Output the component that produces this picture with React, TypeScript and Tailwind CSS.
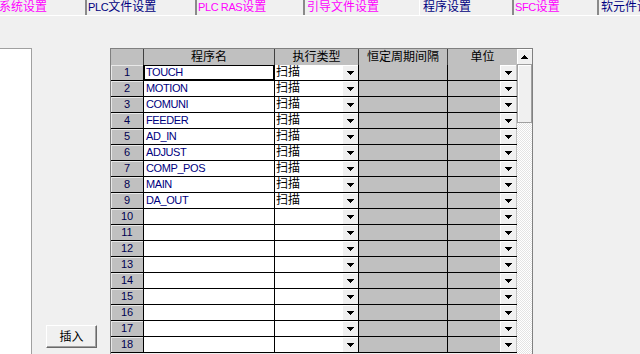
const tabs = [
  { latin: "", cjk: "系统设置", color: "text-[#ff00ff]", cls: "w-[88px] -ml-[1px] border-r-2" },
  { latin: "PLC", cjk: "文件设置", color: "text-[#000080]", cls: "w-[110px] pl-[1px] border-r-2" },
  { latin: "PLC RAS", cjk: "设置", color: "text-[#ff00ff]", cls: "w-[108px] pl-[1px] border-r-2" },
  { latin: "", cjk: "引导文件设置", color: "text-[#ff00ff]", cls: "w-[114px] pl-[2px]" },
  { latin: "", cjk: "程序设置", color: "text-[#000080]", cls: "w-[95px] pl-[3px] border-l border-l-white border-r-2" },
  { latin: "SFC", cjk: "设置", color: "text-[#ff00ff]", cls: "w-[85px] pl-[1px] border-r-2" },
  { latin: "", cjk: "软元件设置", color: "text-[#000080]", cls: "flex-1 pl-[2px]" },
];

const programs = [
  "TOUCH",
  "MOTION",
  "COMUNI",
  "FEEDER",
  "AD_IN",
  "ADJUST",
  "COMP_POS",
  "MAIN",
  "DA_OUT",
  "",
  "",
  "",
  "",
  "",
  "",
  "",
  "",
  "",
];

const Arrow = ({ up }: { up?: boolean }) => (
  <svg width="7" height="4" viewBox="0 0 7 4" shapeRendering="crispEdges">
    <path
      d={
        up
          ? "M3 0h1v1h1v1h1v1h1v1h-7v-1h1v-1h1v-1h1z"
          : "M0 0h7v1h-1v1h-1v1h-1v1h-1v-1h-1v-1h-1v-1h-1z"
      }
      fill="#000"
    />
  </svg>
);

const DropButton = () => (
  <div className="w-[16px] h-full bg-[#f0f0f0] shadow-[inset_1px_1px_0_#ffffff] flex items-center justify-center shrink-0">
    <Arrow />
  </div>
);

export default function App() {
  return (
    <div className="w-[640px] h-[354px] bg-[#f0f0f0] overflow-hidden flex flex-col font-['Liberation_Sans','Noto_Sans_CJK_SC',sans-serif] text-black">
      {/* tab strip */}
      <div className="h-[16px] flex border-b border-white shrink-0 whitespace-nowrap overflow-hidden">
        {tabs.map((t, i) => (
          <div
            key={i}
            className={`h-[15px] shrink-0 border-r-[#8a8a8a] text-[12px] leading-[14px] ${t.color} ${t.cls}`}
          >
            {t.latin && <span className="text-[11px] tracking-[-0.4px]">{t.latin}</span>}
            {t.cjk}
          </div>
        ))}
      </div>

      <div className="flex flex-1 mt-[32px] min-h-0">
        {/* left list */}
        <div className="w-[32px] bg-white border-t border-r border-[#a0a0a0] shrink-0" />

        {/* insert button */}
        <div className="w-[78px] shrink-0 flex flex-col justify-end pb-[6px] pl-[14px]">
          <button className="w-[51px] h-[23px] bg-[#f0f0f0] border border-t-white border-l-white border-r-[#696969] border-b-[#696969] shadow-[inset_-1px_-1px_0_#a0a0a0] text-[12px] leading-[20px] text-black">
            插入
          </button>
        </div>

        {/* grid frame */}
        <div className="flex border-t border-l border-r border-[#808080] shrink-0">
          <div className="w-[406px] flex flex-col">
            {/* header */}
            <div className="grid grid-cols-[33px_131px_84px_89px_69px] h-[16px] shrink-0 bg-[#c0c0c0] text-[12px] leading-[16px]">
              <div className="border-r border-b border-[#404040]" />
              <div className="border-r border-b border-[#404040] text-center">程序名</div>
              <div className="border-r border-b border-[#404040] text-center">执行类型</div>
              <div className="border-r border-b border-[#404040] text-center">恒定周期间隔</div>
              <div className="border-b border-[#404040] text-center">单位</div>
            </div>

            {/* body */}
            {programs.map((name, i) => (
              <div
                key={i}
                className="grid grid-cols-[33px_131px_84px_89px_69px] h-[16px] shrink-0"
              >
                <div className="bg-[#c0c0c0] border-r border-b border-black shadow-[inset_1px_1px_0_#e8e8e8] text-center text-[11px] leading-[15px] text-[#000050]">
                  {i + 1}
                </div>
                <div className="bg-white border-r border-b border-black">
                  {i === 0 ? (
                    <div className="h-full border border-black pl-[1px] text-[11px] leading-[13px] tracking-[-0.4px] text-[#000080]">
                      {name}
                    </div>
                  ) : (
                    <div className="h-full pl-[2px] text-[11px] leading-[15px] tracking-[-0.4px] text-[#000080]">
                      {name}
                    </div>
                  )}
                </div>
                <div className="bg-white border-r border-b border-black flex">
                  <div className="flex-1 pl-[1px] text-[12px] leading-[15px]">
                    {name ? "扫描" : ""}
                  </div>
                  <DropButton />
                </div>
                <div className="bg-[#c0c0c0] border-r border-b border-black" />
                <div className="bg-[#c0c0c0] border-b border-black flex justify-end">
                  <div className="pr-[1px] h-full flex">
                    <DropButton />
                  </div>
                </div>
              </div>
            ))}
          </div>

          {/* vertical scrollbar */}
          <div className="w-[15px] flex flex-col">
            <div className="h-[16px] shrink-0 bg-[#f0f0f0] border-b border-[#a0a0a0] shadow-[inset_1px_1px_0_#ffffff] flex items-center justify-center">
              <Arrow up />
            </div>
            <div className="h-[58px] shrink-0 bg-[#f0f0f0] border-l border-r border-b border-[#a0a0a0] shadow-[inset_1px_1px_0_#ffffff]" />
            <div className="flex-1 bg-[image:repeating-conic-gradient(#ffffff_0_25%,#e4e4e4_0_50%)] bg-[length:2px_2px]" />
          </div>
        </div>
      </div>
    </div>
  );
}
